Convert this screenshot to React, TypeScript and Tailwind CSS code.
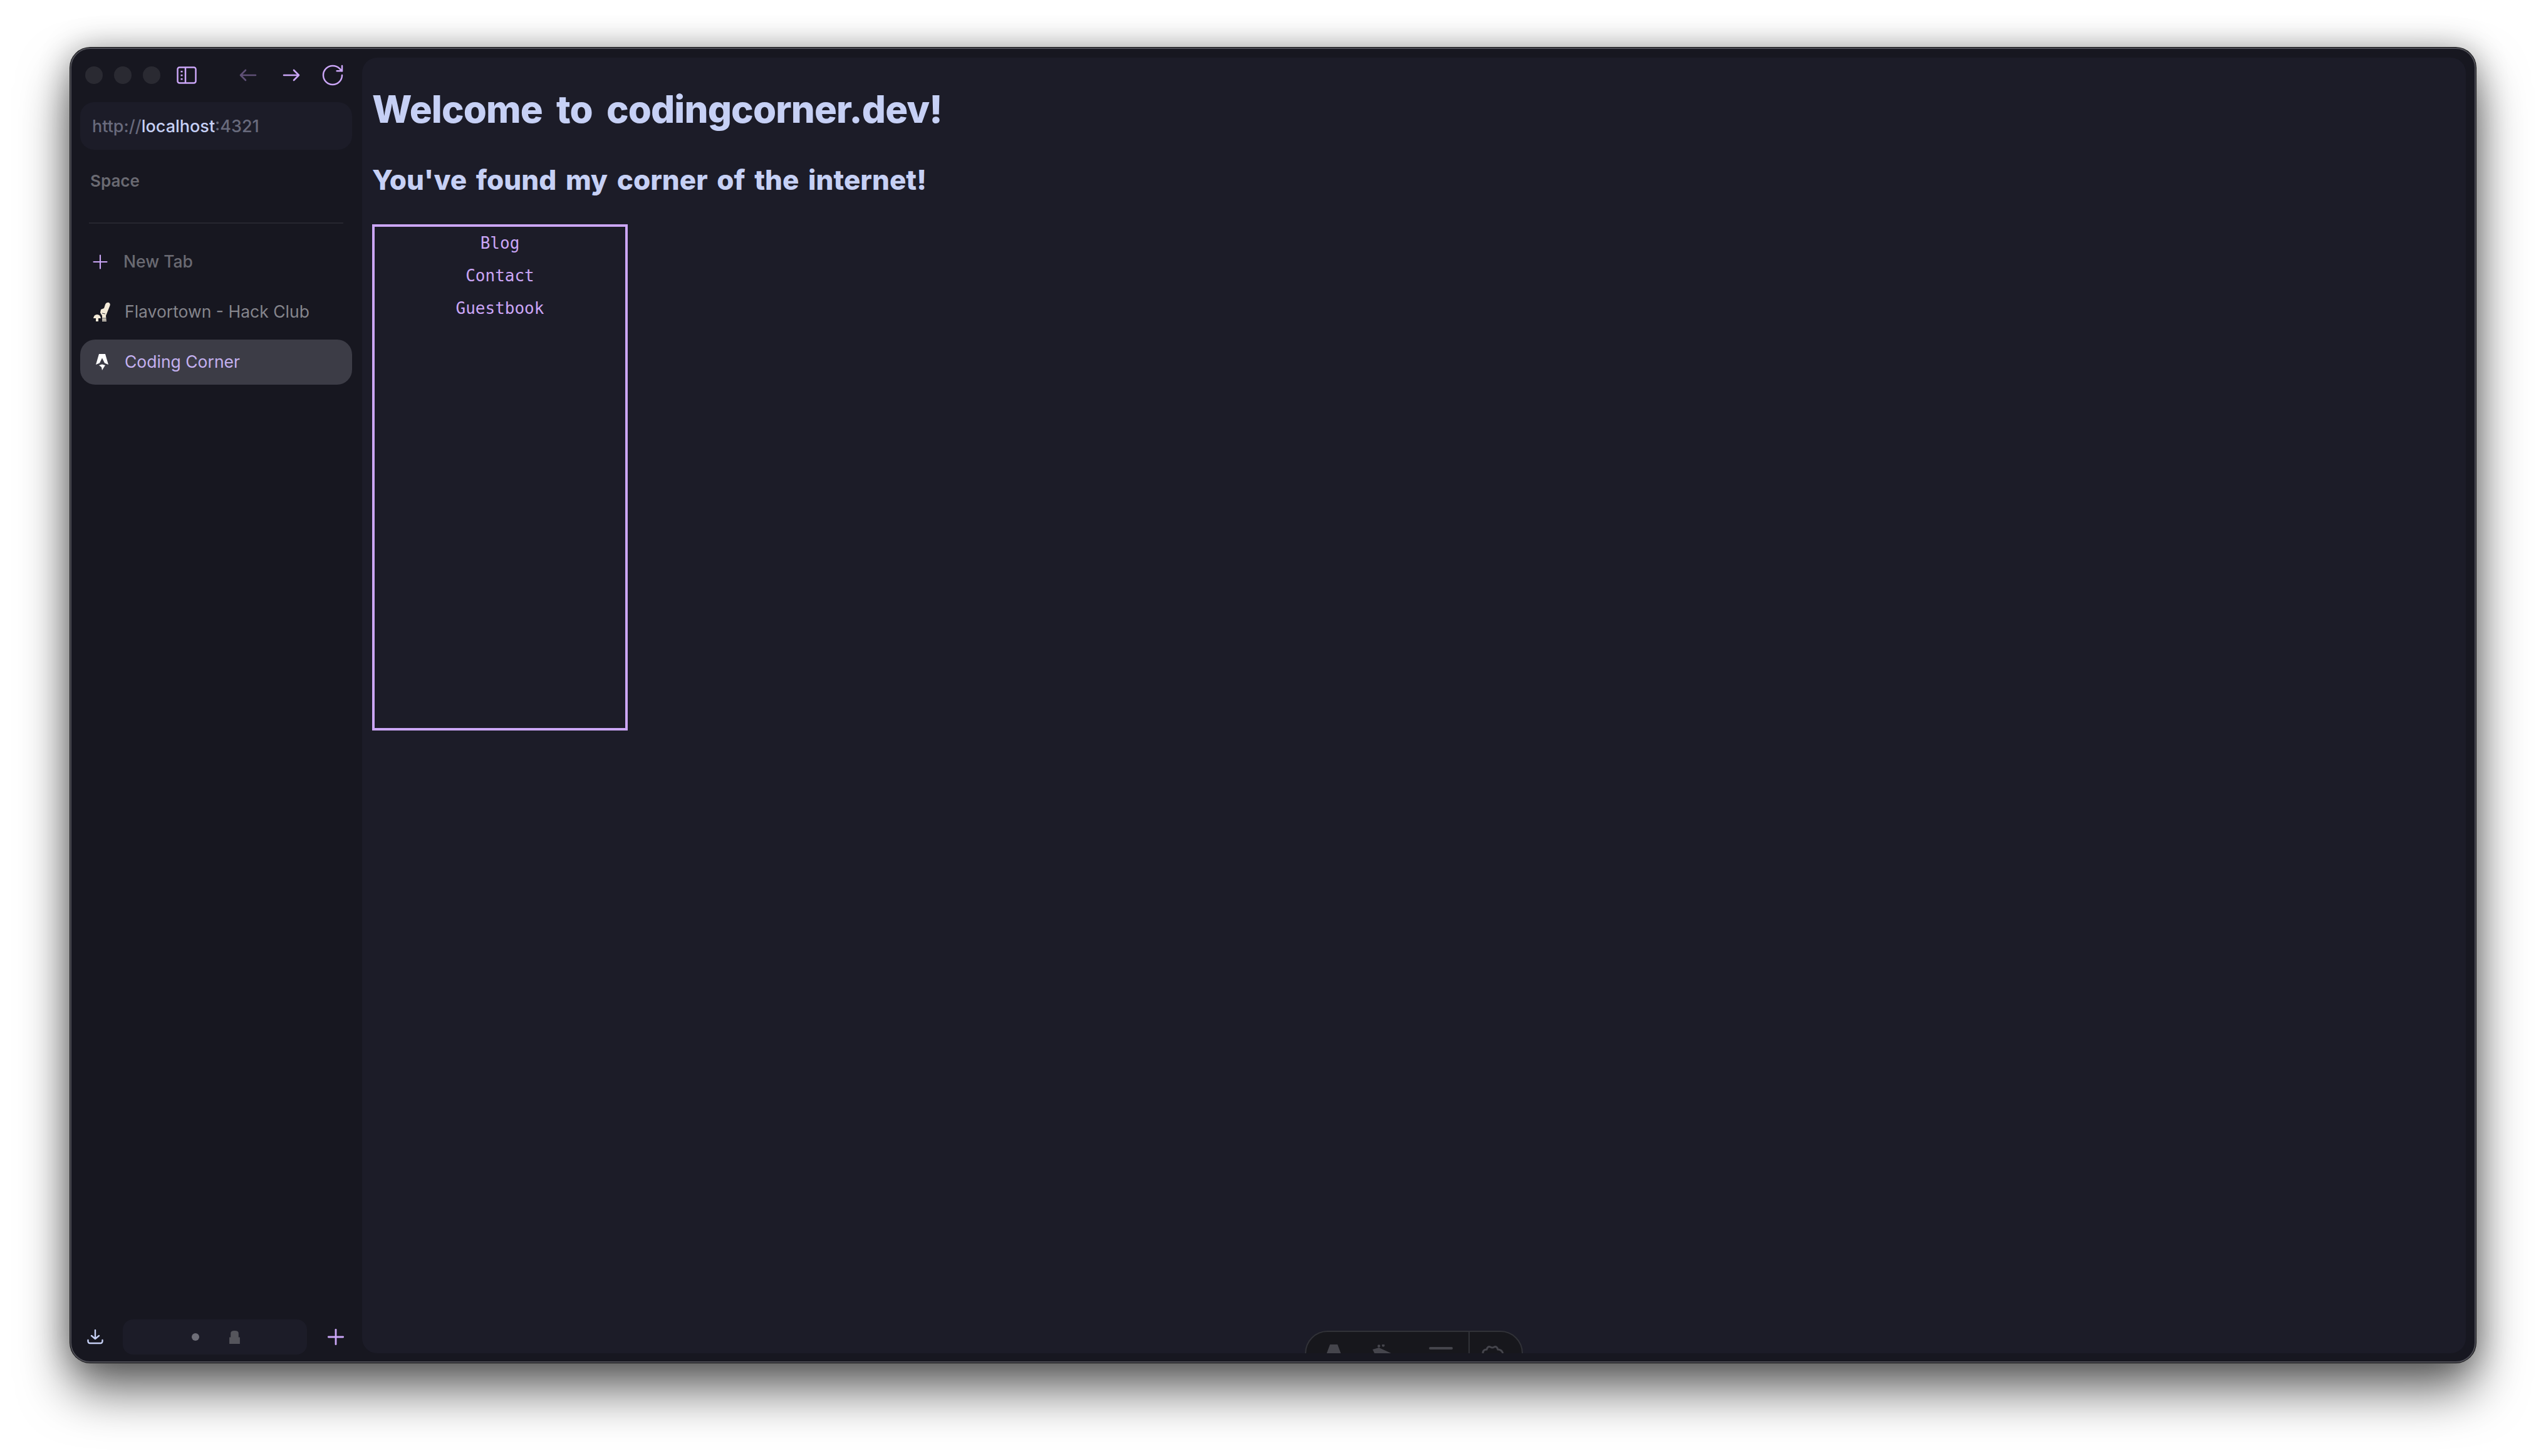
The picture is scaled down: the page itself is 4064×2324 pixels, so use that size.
import { RotateCw, Plus } from "lucide-react";

function SidebarIcon() {
  return (
    <svg viewBox="0 0 32 28" className="w-[32px] h-[28px]" fill="none" stroke="#cba6f7" strokeWidth="2.5">
      <rect x="1.5" y="1.5" width="29" height="25" rx="3" />
      <path d="M14 1.5v25" />
      <path d="M8 7v2.5M8 13v2.5M8 19v2.5" strokeWidth="3" />
    </svg>
  );
}

function Arrow({ back }: { back?: boolean }) {
  return (
    <svg viewBox="0 0 28 20" className={back ? "w-[28px] h-[20px] opacity-40" : "w-[28px] h-[20px]"} fill="none" stroke="#cba6f7" strokeWidth="2.6" strokeLinecap="round" strokeLinejoin="round">
      {back ? <path d="M26 10H2M10 2l-8 8 8 8" /> : <path d="M2 10h24M18 2l8 8-8 8" />}
    </svg>
  );
}

function DownloadIcon() {
  return (
    <svg viewBox="0 0 26 24" className="w-[26px] h-[24px]" fill="none" stroke="#c6d0f5" strokeWidth="2.4" strokeLinecap="round" strokeLinejoin="round">
      <path d="M13 1v14M7 10l6 5 6-5" />
      <path d="M1.5 17v2a3 3 0 0 0 3 3h17a3 3 0 0 0 3-3v-2" />
    </svg>
  );
}

function FlavortownIcon() {
  return (
    <svg viewBox="0 0 28 32" className="w-[28px] h-[32px]" fill="#f3ead8">
      <path d="M20 4 Q22 0 26 1 Q29 3 27 7 L21 22 L22 31 L15 31 L15 22 L12 17 L13 12 L18 10Z" />
      <path d="M1 26 Q2 20 7 20 Q12 20 13 26Z" />
      <rect x="5" y="26" width="4" height="5" />
      <path d="M15 26h7M15 29h7M15 18l5 1" stroke="#3a3a40" strokeWidth="1" fill="none" />
    </svg>
  );
}

function AstroIcon() {
  return (
    <svg viewBox="0 0 20 26" className="w-[20px] h-[26px]" fill="#ffffff">
      <path d="M5 0h10l5 17-6-2.5-4-8-4 8-6 2.5z" />
      <path d="M5 18l5-1.5 5 1.5-2 3-3 5-1-5z" />
    </svg>
  );
}

function Dock() {
  return (
    <div className="absolute top-[2032px] left-[1505px] w-[348px] h-[60px] border-2 border-[#313238] rounded-t-[36px] bg-[#17171c] flex overflow-hidden">
      <div className="w-[261px] relative border-r-2 border-[#313238]">
        <svg viewBox="0 0 24 16" className="absolute left-[32px] top-[20px] w-[24px] h-[16px]" fill="#45454c"><path d="M6 0h12l6 16H0z" /></svg>
        <svg viewBox="0 0 34 16" className="absolute left-[106px] top-[20px] w-[34px] h-[16px]" fill="#45454c"><path d="M0 8l4 8 30 0-24-11z" /><circle cx="10" cy="2.5" r="2.2" /><circle cx="17" cy="1.5" r="2.2" /></svg>
        <div className="absolute left-[196px] top-[24px] w-[38px] h-[4px] rounded-full bg-[#45454c]" />
      </div>
      <div className="flex-1 relative">
        <svg viewBox="0 0 36 16" className="absolute left-[19px] top-[20px] w-[36px] h-[16px]" fill="none" stroke="#45454c" strokeWidth="3"><path d="M2 14q0-6 6-6 2-6 6-4 4 2 6 0 4-2 6 4 6 0 8 6" /></svg>
      </div>
    </div>
  );
}

export default function App() {
  return (
    <div className="w-[4064px] h-[2324px] bg-white pt-[76px] pl-[112px]" style={{ fontFamily: "Inter, sans-serif" }}>
      <div className="w-[3840px] h-[2099px] rounded-[32px] bg-[#171720] border-2 border-[#4f4f57] shadow-[0_0_0_1px_#0e0e10,0_44px_80px_rgba(0,0,0,0.6),0_0_50px_rgba(0,0,0,0.3)] flex pr-[14px] pt-[14px] pb-[13px] overflow-hidden">
        <aside className="w-[464px] shrink-0 flex flex-col pl-[14px] pr-[16px]">
          <div className="h-[56px] flex items-center shrink-0">
            <div className="flex gap-[18px] pl-[8px]">
              <div className="w-[28px] h-[28px] rounded-full bg-[#2a2a32]" />
              <div className="w-[28px] h-[28px] rounded-full bg-[#2a2a32]" />
              <div className="w-[28px] h-[28px] rounded-full bg-[#2a2a32]" />
            </div>
            <div className="ml-[26px] flex"><SidebarIcon /></div>
            <div className="ml-[68px] flex"><Arrow back /></div>
            <div className="ml-[41px] flex"><Arrow /></div>
            <RotateCw className="ml-[32px] w-[40px] h-[40px] text-[#cba6f7]" strokeWidth={1.5} />
          </div>
          <div className="mt-[15px] h-[76px] pt-[2px] rounded-[22px] bg-[#1c1c28] flex items-center pl-[19px] text-[27px] font-medium text-[#686a7c] shrink-0">
            http://<span className="text-[#c6d0f5]">localhost</span>:4321
          </div>
          <div className="mt-[33px] pl-[16px] text-[26px] font-semibold text-[#6a6a72] leading-[34px]">Space</div>
          <div className="mt-[49px] mx-[14px] h-[2px] bg-[#26262f] shrink-0" />
          <div className="mt-[41px] h-[40px] flex items-center pl-[14px] text-[26.5px] font-medium text-[#6a6a72]">
            <Plus className="w-[36px] h-[36px] text-[#cba6f7] mr-[19px]" strokeWidth={1.4} />
            New Tab
          </div>
          <div className="mt-[30px] h-[60px] flex items-center pl-[20px] text-[26.5px] text-[#85858c]">
            <FlavortownIcon />
            <span className="ml-[23px]">Flavortown - Hack Club</span>
          </div>
          <div className="mt-[14px] h-[72px] rounded-[24px] bg-[#3c3c46] flex items-center pl-[25px] text-[26.5px] text-[#c4b1f0]">
            <AstroIcon />
            <span className="ml-[26px]">Coding Corner</span>
          </div>
          <div className="mt-auto -mb-[2px] flex items-center h-[56px]">
            <div className="ml-[11px] flex"><DownloadIcon /></div>
            <div className="ml-[31px] w-[294px] h-[56px] rounded-[16px] bg-[#1c1c28] relative">
              <div className="absolute left-[110px] top-[22px] w-[12px] h-[12px] rounded-full bg-[#6e6e78]" />
              <svg viewBox="0 0 16 20" className="absolute left-[170px] top-[18px] w-[17px] h-[21px]" fill="#55555c"><path d="M2 10V4q0-4 6-4t6 4v6h2v10H0V10z" /></svg>
            </div>
            <Plus className="ml-[26px] w-[40px] h-[40px] text-[#cba6f7]" strokeWidth={1.7} />
          </div>
        </aside>
        <main className="flex-1 rounded-[24px] bg-[#1c1c28] relative overflow-hidden pl-[16px] pt-[42px]">
          <h1 className="text-[60px] leading-[80px] font-extrabold tracking-[-0.015em] [word-spacing:10px] text-[#c6d0f5]">Welcome to codingcorner.dev!</h1>
          <h2 className="mt-[45px] text-[44px] leading-[56px] font-extrabold [word-spacing:5px] text-[#c6d0f5]">You've found my corner of the internet!</h2>
          <nav className="mt-[43px] w-[408px] h-[808px] border-4 border-[#cba6f7] flex flex-col items-center text-[26px] leading-[52px] text-[#cba6f7]" style={{ fontFamily: "'DejaVu Sans Mono', monospace" }}>
            <a>Blog</a>
            <a>Contact</a>
            <a>Guestbook</a>
          </nav>
          <Dock />
        </main>
      </div>
    </div>
  );
}
